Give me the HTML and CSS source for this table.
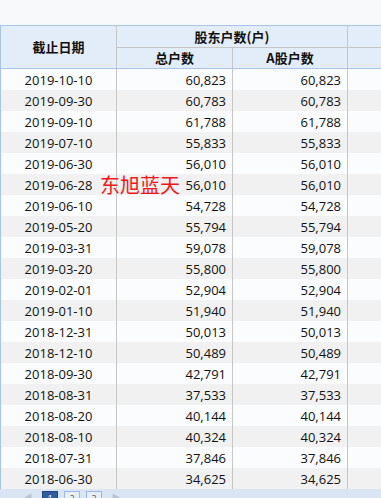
FILE: index.html
```html
<!DOCTYPE html>
<html>
<head>
<meta charset="utf-8">
<link rel="stylesheet" href="styles.css">
</head>
<body>
<div class="wrap">
  <table class="grid">
    <colgroup>
      <col class="c1"><col class="c2"><col class="c3"><col class="c4">
    </colgroup>
    <thead>
      <tr class="h1">
        <th rowspan="2">截止日期</th>
        <th colspan="2">股东户数(户)</th>
        <th></th>
      </tr>
      <tr class="h2">
        <th>总户数</th>
        <th>A股户数</th>
        <th></th>
      </tr>
    </thead>
    <tbody>
      <tr><td class="d">2019-10-10</td><td>60,823</td><td>60,823</td><td></td></tr>
      <tr><td class="d">2019-09-30</td><td>60,783</td><td>60,783</td><td></td></tr>
      <tr><td class="d">2019-09-10</td><td>61,788</td><td>61,788</td><td></td></tr>
      <tr><td class="d">2019-07-10</td><td>55,833</td><td>55,833</td><td></td></tr>
      <tr><td class="d">2019-06-30</td><td>56,010</td><td>56,010</td><td></td></tr>
      <tr><td class="d">2019-06-28</td><td>56,010</td><td>56,010</td><td></td></tr>
      <tr><td class="d">2019-06-10</td><td>54,728</td><td>54,728</td><td></td></tr>
      <tr><td class="d">2019-05-20</td><td>55,794</td><td>55,794</td><td></td></tr>
      <tr><td class="d">2019-03-31</td><td>59,078</td><td>59,078</td><td></td></tr>
      <tr><td class="d">2019-03-20</td><td>55,800</td><td>55,800</td><td></td></tr>
      <tr><td class="d">2019-02-01</td><td>52,904</td><td>52,904</td><td></td></tr>
      <tr><td class="d">2019-01-10</td><td>51,940</td><td>51,940</td><td></td></tr>
      <tr><td class="d">2018-12-31</td><td>50,013</td><td>50,013</td><td></td></tr>
      <tr><td class="d">2018-12-10</td><td>50,489</td><td>50,489</td><td></td></tr>
      <tr><td class="d">2018-09-30</td><td>42,791</td><td>42,791</td><td></td></tr>
      <tr><td class="d">2018-08-31</td><td>37,533</td><td>37,533</td><td></td></tr>
      <tr><td class="d">2018-08-20</td><td>40,144</td><td>40,144</td><td></td></tr>
      <tr><td class="d">2018-08-10</td><td>40,324</td><td>40,324</td><td></td></tr>
      <tr><td class="d">2018-07-31</td><td>37,846</td><td>37,846</td><td></td></tr>
      <tr><td class="d">2018-06-30</td><td>34,625</td><td>34,625</td><td></td></tr>
    </tbody>
  </table>
  <div class="pager">
    <span class="nav">◀</span>
    <span class="pg active">1</span>
    <span class="pg">2</span>
    <span class="pg">3</span>
    <span class="nav">▶</span>
  </div>
  <div class="stamp">东旭蓝天</div>
</div>
</body>
</html>
```
FILE: styles.css
```css
html, body {
  margin: 0;
  padding: 0;
  background: #f8f9fb;
  overflow: hidden;
}
.wrap {
  position: relative;
  padding-top: 25px;
  width: 381px;
  font-family: "Open Sans", "Noto Sans CJK SC", sans-serif;
  font-size: 13px;
  color: #111;
}
.grid {
  border-collapse: collapse;
  table-layout: fixed;
  width: 381px;
}
.c1 { width: 116px; }
.c2 { width: 116px; }
.c3 { width: 115px; }
.c4 { width: 34px; }
thead th {
  background: #e3edf9;
  font-family: "Noto Sans CJK SC", sans-serif;
  font-weight: bold;
  font-size: 13px;
  padding: 0;
  border-left: 1px solid #c6c6c6;
  border-right: 1px solid #c6c6c6;
  line-height: 20px;
}
thead th:last-child { border-right: none; }
thead .h1 th {
  height: 21px;
  border-top: 1px solid #a9c4ea;
  border-bottom: 1px solid #c6c6c6;
}
thead .h1 th[rowspan] {
  border-bottom: 1px solid #a9c4ea;
}
thead .h2 th {
  height: 20px;
  border-bottom: 1px solid #a9c4ea;
}
thead th:first-child {
  border-left: 1px solid #a9c4ea;
}
tbody td {
  height: 21px;
  padding: 0 6px 0 0;
  text-align: right;
  border-left: 1px solid #c6c6c6;
  border-right: 1px solid #c6c6c6;
  line-height: 20px;
  white-space: nowrap;
}
tbody td:last-child { border-right: none; }
tbody td:first-child {
  border-left: 1px solid #a9c4ea;
}
tbody td.d {
  text-align: center;
  padding: 0;
}
tbody tr:nth-child(odd) td { background: #fbfcfd; }
tbody tr:nth-child(even) td { background: #f1f1f1; }
.pager {
  background: #dae5f4;
  height: 12px;
  overflow: hidden;
  display: flex;
  align-items: flex-start;
  gap: 6px;
  padding: 2px 0 0 20px;
  font-size: 9px;
}
.nav {
  color: #b9c4d2;
  width: 16px;
  text-align: center;
  line-height: 14px;
}
.pg {
  width: 14px;
  height: 16px;
  border: 1px solid #9bb6e0;
  background: #e8eef8;
  color: #555;
  text-align: center;
  line-height: 14px;
}
.pg.active {
  background: #2f5d9f;
  border-color: #24467a;
  color: #fff;
}
.stamp {
  position: absolute;
  left: 100px;
  top: 171px;
  font-family: "Noto Sans CJK SC", sans-serif;
  font-size: 20px;
  color: #f01818;
  line-height: 28px;
}
```
